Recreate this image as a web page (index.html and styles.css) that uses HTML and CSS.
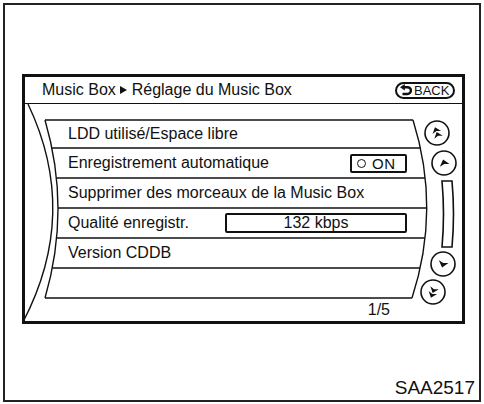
FILE: index.html
```html
<!DOCTYPE html>
<html lang="fr">
<head>
<meta charset="utf-8">
<title>Music Box</title>
<link rel="stylesheet" href="styles.css">
</head>
<body>
<div class="frame">
  <div class="screen">
    <div class="titlebar">
      <div class="crumb">Music Box <svg class="tri" viewBox="0 0 7 8" width="7" height="8"><polygon points="0,0 7,4 0,8"/></svg> Réglage du Music Box</div>
      <div class="back">
        <svg class="back-ico" viewBox="0 0 12 12" width="12" height="12">
          <path d="M4 3.2 H7.5 A3.4 3.4 0 0 1 7.5 10 H2.5" fill="none" stroke="#111" stroke-width="2.4"/>
          <polygon points="0,3.2 4.8,0 4.8,6.4" fill="#111"/>
        </svg>
        <span>BACK</span>
      </div>
    </div>
    <div class="body">
      <svg class="deco" viewBox="25 104 437 217" width="437" height="217">
        <g fill="none" stroke="#111" stroke-width="1.4">
          <path d="M28 104 Q80 213 23 322"/>
          <path d="M45 120 Q71 209 45 298"/>
          <path d="M413 120 Q441 209 412 298"/>
          <path d="M45 120 H413"/>
          <path d="M45 298 H412"/>
          <path d="M51.9 148 H420.3"/>
          <path d="M56.4 178 H425"/>
          <path d="M58 208 H426.5"/>
          <path d="M56.6 238 H424.8"/>
          <path d="M52.3 268 H420"/>
        </g>
        <g fill="none" stroke="#111" stroke-width="1.6">
          <circle cx="437" cy="133" r="12"/>
          <circle cx="444" cy="163" r="12"/>
          <circle cx="443" cy="264" r="12"/>
          <circle cx="433" cy="292" r="12"/>
          <path d="M442 181 Q445 214 442 247 H452 Q455 214 452 181 Z"/>
        </g>
        <g fill="#111">
          <g transform="translate(437 133) rotate(-20)">
            <polygon points="0,-6 4.5,-0.5 0,-2 -4.5,-0.5"/>
            <polygon points="0,-1 4.5,4.5 0,3 -4.5,4.5"/>
          </g>
          <g transform="translate(444 163) rotate(-15)">
            <polygon points="0,-3.5 5,2.5 0,1 -5,2.5"/>
          </g>
          <g transform="translate(443 264) rotate(15)">
            <polygon points="0,3.5 5,-2.5 0,-1 -5,-2.5"/>
          </g>
          <g transform="translate(433 292) rotate(20)">
            <polygon points="0,6 4.5,0.5 0,2 -4.5,0.5"/>
            <polygon points="0,1 4.5,-4.5 0,-3 -4.5,-4.5"/>
          </g>
        </g>
      </svg>
      <div class="list">
        <div class="row first">LDD utilisé/Espace libre</div>
        <div class="row"><span>Enregistrement automatique</span><span class="onbox"><i class="dot"></i>ON</span></div>
        <div class="row">Supprimer des morceaux de la Music Box</div>
        <div class="row"><span>Qualité enregistr.</span><span class="valbox">132 kbps</span></div>
        <div class="row">Version CDDB</div>
        <div class="row"></div>
      </div>
      <div class="pager">1/5</div>
    </div>
  </div>
  <div class="caption">SAA2517</div>
</div>
</body>
</html>
```

FILE: styles.css
```css
html, body {
  margin: 0;
  padding: 0;
  background: #fff;
}
body {
  font-family: "Liberation Sans", Arial, Helvetica, sans-serif;
  color: #111;
}
.frame {
  box-sizing: border-box;
  margin: 3px;
  width: 478px;
  height: 399px;
  border: 2px solid #222;
  padding: 69px 0 0 17px;
  display: flex;
  flex-direction: column;
}
.screen {
  box-sizing: border-box;
  width: 443px;
  height: 250px;
  border: 3px solid #111;
  display: flex;
  flex-direction: column;
}
.titlebar {
  box-sizing: border-box;
  height: 27px;
  border-bottom: 1px solid #111;
  display: flex;
  align-items: center;
  padding: 0 7px 0 17px;
}
.crumb {
  font-size: 16px;
  white-space: nowrap;
}
.tri {
  fill: #111;
  vertical-align: 1px;
}
.back {
  margin-left: auto;
  box-sizing: border-box;
  width: 60px;
  height: 17px;
  border: 2px solid #111;
  border-radius: 9px;
  display: flex;
  align-items: center;
  padding-left: 3px;
  gap: 2px;
  font-size: 13px;
  line-height: 1;
}
.body {
  position: relative;
  flex: 1;
}
.deco {
  position: absolute;
  left: 0;
  top: 0;
  overflow: visible;
  pointer-events: none;
}
.list {
  padding-top: 16px;
}
.row {
  box-sizing: border-box;
  height: 30px;
  display: flex;
  align-items: center;
  padding: 0 55px 0 43px;
  font-size: 16px;
  white-space: nowrap;
}
.row.first {
  height: 28px;
}
.onbox {
  margin-left: auto;
  box-sizing: border-box;
  width: 57px;
  height: 19px;
  border: 2px solid #111;
  border-radius: 2px;
  display: flex;
  align-items: center;
  padding-left: 5px;
  gap: 6px;
  font-size: 15px;
  letter-spacing: 0.5px;
}
.dot {
  display: block;
  box-sizing: border-box;
  width: 9px;
  height: 9px;
  border: 1.6px solid #111;
  border-radius: 50%;
}
.valbox {
  margin-left: auto;
  box-sizing: border-box;
  width: 182px;
  height: 20px;
  border: 2px solid #111;
  border-radius: 2px;
  display: flex;
  align-items: center;
  justify-content: center;
  font-size: 16px;
}
.pager {
  height: 23px;
  line-height: 23px;
  text-align: right;
  padding-right: 72px;
  font-size: 16px;
}
.caption {
  margin-top: auto;
  align-self: flex-end;
  margin-right: 4px;
  margin-bottom: 2px;
  font-size: 19px;
  line-height: 21px;
}
```
